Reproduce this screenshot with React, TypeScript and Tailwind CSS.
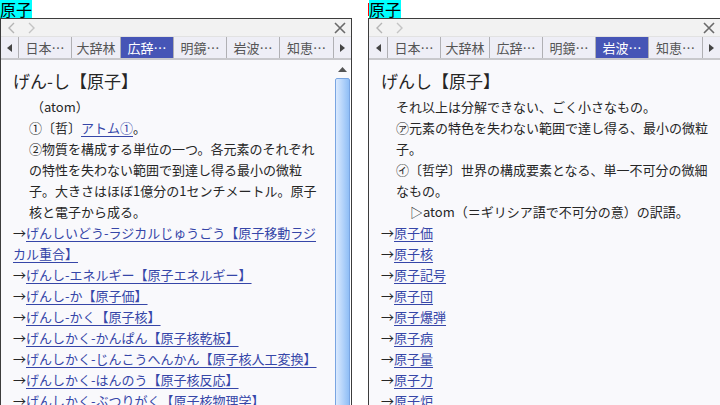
import React from 'react'

const FONT = { fontFamily: '"Noto Sans CJK JP", "Noto Sans", sans-serif' }

const TABS = [
  { label: '日本…', w: 'w-[53px]' },
  { label: '大辞林', w: 'w-[49px]' },
  { label: '広辞…', w: 'w-[53px]' },
  { label: '明鏡…', w: 'w-[53px]' },
  { label: '岩波…', w: 'w-[53px]' },
  { label: '知恵…', w: 'w-[54px]' },
]

function Toolbar() {
  return (
    <div className="flex h-[18px] items-center border-b border-[#e2e2e2] bg-[#f2f2f2] px-[6px]">
      <svg width="10" height="12" viewBox="0 0 10 12" className="mr-[9px]">
        <polyline points="7,1 2,6 7,11" fill="none" stroke="#b4b4b4" strokeWidth="1.4" />
      </svg>
      <svg width="10" height="12" viewBox="0 0 10 12">
        <polyline points="3,1 8,6 3,11" fill="none" stroke="#c4c4c4" strokeWidth="1.4" />
      </svg>
      <div className="flex-1" />
      <svg width="12" height="12" viewBox="0 0 12 12" className="mr-[-1px]">
        <path d="M1 1 L11 11 M11 1 L1 11" stroke="#6a6a6a" strokeWidth="1.6" />
      </svg>
    </div>
  )
}

function TabRow({ active, first }: { active: number; first: string }) {
  return (
    <div className="flex h-[23px] border-b-2 border-[#c8c8cc] bg-[#eeeef6] text-[13px] leading-[21px] text-[#555]">
      <div className={`flex ${first} flex-none items-center justify-center`}>
        <svg width="5" height="8" viewBox="0 0 5 8">
          <polygon points="5,0 0,4 5,8" fill="#444" />
        </svg>
      </div>
      {TABS.map((t, i) => (
        <div
          key={t.label}
          className={`${t.w} flex flex-none items-center justify-center border-l border-[#b0b0b4] ${
            i === active ? 'bg-[#4655b6] text-white' : ''
          }`}
        >
          {t.label}
        </div>
      ))}
      <div className="flex flex-1 items-center justify-center border-l border-[#b0b0b4]">
        <svg width="5" height="8" viewBox="0 0 5 8">
          <polygon points="0,0 5,4 0,8" fill="#444" />
        </svg>
      </div>
    </div>
  )
}

function Link({ children }: { children: React.ReactNode }) {
  return <span className="text-[#3646a8] underline decoration-[#3646a8] underline-offset-[3px]">{children}</span>
}

function Ref({ text }: { text: string }) {
  return (
    <div>
      →<Link>{text}</Link>
    </div>
  )
}

function LeftContent() {
  return (
    <div className="pl-[12px] pt-[8px] text-[13px] leading-[21px] text-[#262626]">
      <div className="mb-[2px] h-[26px] text-[17px] leading-[26px]">げん-し【原子】</div>
      <div className="whitespace-nowrap pl-[16px]">
        <div className="pl-[2px]">（atom）</div>
        <div>
          ①〔哲〕<Link>アトム①</Link>。
        </div>
        <div>②物質を構成する単位の一つ。各元素のそれぞれ</div>
        <div>の特性を失わない範囲で到達し得る最小の微粒</div>
        <div>子。大きさはほぼ1億分の1センチメートル。原子</div>
        <div>核と電子から成る。</div>
      </div>
      <div className="whitespace-nowrap">
        <div>
          →<Link>げんしいどう-ラジカルじゅうごう【原子移動ラジ</Link>
        </div>
        <div>
          <Link>カル重合】</Link>
        </div>
        <Ref text="げんし-エネルギー【原子エネルギー】" />
        <Ref text="げんし-か【原子価】" />
        <Ref text="げんし-かく【原子核】" />
        <Ref text="げんしかく-かんぱん【原子核乾板】" />
        <Ref text="げんしかく-じんこうへんかん【原子核人工変換】" />
        <Ref text="げんしかく-はんのう【原子核反応】" />
        <Ref text="げんしかく-ぶつりがく【原子核物理学】" />
      </div>
    </div>
  )
}

function RightContent() {
  return (
    <div className="pl-[12px] pt-[8px] text-[13px] leading-[21px] text-[#262626]">
      <div className="mb-[2px] h-[26px] text-[17px] leading-[26px]">げんし【原子】</div>
      <div className="whitespace-nowrap pl-[15px]">
        <div>それ以上は分解できない、ごく小さなもの。</div>
        <div>㋐元素の特色を失わない範囲で達し得る、最小の微粒</div>
        <div>子。</div>
        <div>㋑〔哲学〕世界の構成要素となる、単一不可分の微細</div>
        <div>なもの。</div>
        <div className="pl-[14px]">▷atom（＝ギリシア語で不可分の意）の訳語。</div>
      </div>
      <div className="whitespace-nowrap">
        {['原子価', '原子核', '原子記号', '原子団', '原子爆弾', '原子病', '原子量', '原子力', '原子炉'].map((t) => (
          <Ref key={t} text={t} />
        ))}
      </div>
    </div>
  )
}

function Scrollbar() {
  return (
    <div className="flex w-[16px] flex-none flex-col bg-white pr-[1px]">
      <div className="flex h-[18px] flex-none items-center justify-center bg-[#f9f9fc]">
        <svg width="9" height="5" viewBox="0 0 9 5">
          <polygon points="0,5 4.5,0 9,5" fill="#555" />
        </svg>
      </div>
      <div className="flex-1 rounded-t-[2px] border border-[#79a5e2] bg-gradient-to-r from-[#dbeafe] to-[#8fbef6]" />
    </div>
  )
}

function Label({ cursor }: { cursor?: boolean }) {
  return (
    <div className="flex h-[19px] items-start">
      {cursor && <div className="mt-[3px] h-[13px] w-[1px] bg-[#ff0000]" />}
      <div className="h-[18px] bg-[#00ffff] pr-[0px] text-[16px] leading-[18px] text-black">原子</div>
    </div>
  )
}

export default function App() {
  return (
    <div className="flex h-[405px] w-[720px] gap-[16px] overflow-hidden bg-white" style={FONT}>
      <div className="flex w-[352px] flex-none flex-col">
        <Label />
        <div className="flex flex-1 flex-col border-x border-t border-[#3c3c3c]">
          <Toolbar />
          <TabRow active={2} first="w-[17px]" />
          <div className="flex flex-1 bg-[#f9f9fc]">
            <div className="flex-1 overflow-hidden">
              <LeftContent />
            </div>
            <Scrollbar />
          </div>
        </div>
      </div>
      <div className="flex w-[353px] flex-none flex-col">
        <Label cursor />
        <div className="flex flex-1 flex-col border-x border-t border-[#3c3c3c]">
          <Toolbar />
          <TabRow active={4} first="w-[18px]" />
          <div className="flex-1 overflow-hidden bg-[#f9f9fc]">
            <RightContent />
          </div>
        </div>
      </div>
    </div>
  )
}
